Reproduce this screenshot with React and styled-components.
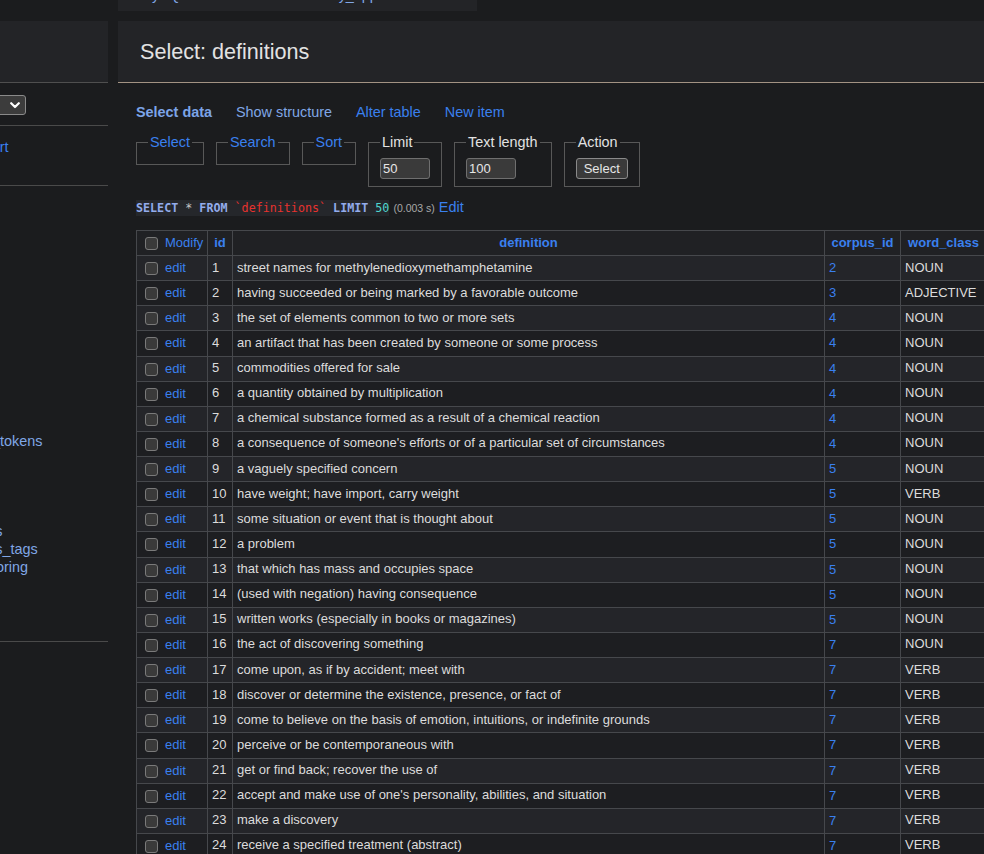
import React from 'react';
import styled, { createGlobalStyle } from 'styled-components';

const LINK = '#3a80ef';
const VISITED = '#80a7e6';

const GlobalStyle = createGlobalStyle`
  html, body { margin: 0; padding: 0; background: #1b1c1e; overflow: hidden; }
  body { font-family: "Liberation Sans", Arial, sans-serif; font-size: 14.4px; color: #dcdcdc; }
  * { box-sizing: border-box; }
`;

const Page = styled.div`
  display: flex;
  align-items: flex-start;
  width: 984px;
  height: 854px;
  overflow: hidden;
`;

/* ---------- Sidebar ---------- */
const Sidebar = styled.aside`
  width: 108px;
  flex-shrink: 0;
  padding-top: 21px;
  overflow: hidden;
`;

const SideHead = styled.div`
  height: 62px;
  background: #232427;
  border-bottom: 1px solid #4f4f4f;
`;

const DbSelect = styled.div`
  margin: 12px 0 0 -60px;
  width: 86px;
  height: 20px;
  border: 1px solid #8a8a8a;
  border-radius: 3px;
  background: #3c3c3c;
  display: flex;
  align-items: center;
  justify-content: flex-end;
  padding-right: 3px;
`;

const SideRule = styled.hr`
  margin: ${p => p.$top}px 0 0 0;
  height: 0;
  border: 0;
  border-top: 1px solid #4a4a4a;
`;

const SideLinks = styled.p`
  margin: 13px 0 0 ${p => p.$offset}px;
  height: 33px;
  line-height: 16px;
  white-space: nowrap;
`;

const SideLink = styled.a`
  color: ${p => (p.$visited ? VISITED : LINK)};
  text-decoration: none;
`;

const TableList = styled.ul`
  list-style: none;
  margin: 12px 0 0 -36px;
  padding: 0;
`;

const TableItem = styled.li`
  height: 18px;
  line-height: 18px;
  white-space: nowrap;
`;

/* ---------- Main ---------- */
const Main = styled.main`
  flex: 1;
  min-width: 0;
  margin-left: 10px;
`;

const Breadcrumb = styled.div`
  width: 359px;
  height: 11px;
  background: #232427;
  overflow: hidden;
  padding-left: 22px;
  margin-bottom: 10px;
`;

const CrumbText = styled.div`
  margin-top: -13px;
  line-height: 16px;
  color: ${VISITED};
  white-space: nowrap;
`;

const Header = styled.header`
  height: 62px;
  background: #232427;
  border-bottom: 1px solid #a39383;
  display: flex;
  align-items: center;
  padding-left: 22px;
`;

const Title = styled.h2`
  margin: 0;
  font-size: 21.6px;
  font-weight: normal;
  color: #e2e2e2;
`;

const Content = styled.div`
  padding: 0 18px;
`;

const Menu = styled.nav`
  display: flex;
  gap: 24px;
  margin-top: 21px;
  line-height: 16px;
`;

const MenuLink = styled.a`
  color: ${p => p.$color};
  font-weight: ${p => (p.$bold ? 'bold' : 'normal')};
  text-decoration: none;
`;

const Forms = styled.div`
  display: flex;
  align-items: flex-start;
  gap: 12px;
  margin-top: 14px;
`;

const Fieldset = styled.fieldset`
  margin: 0;
  padding: 7px 11px;
  border: 1px solid #585858;
  min-width: 0;
`;

const Legend = styled.legend`
  padding: 0 2px;
  line-height: 16px;
  color: ${p => (p.$link ? LINK : '#e2e2e2')};
`;

const TextInput = styled.input`
  display: block;
  width: 50px;
  height: 21px;
  margin: 1px 0 0 0;
  padding: 0 2px;
  background: #3a3a3a;
  border: 1px solid #6f6f6f;
  border-radius: 3px;
  color: #e6e6e6;
  font-family: "Liberation Sans", Arial, sans-serif;
  font-size: 13px;
`;

const Button = styled.button`
  display: block;
  height: 21px;
  margin: 1px 0 0 0;
  padding: 0 7px;
  background: #3a3a3a;
  border: 1px solid #8a8a8a;
  border-radius: 3px;
  color: #e6e6e6;
  font-family: "Liberation Sans", Arial, sans-serif;
  font-size: 13px;
`;

const SqlLine = styled.p`
  margin: 12px 0 0 0;
  line-height: 16px;
  white-space: nowrap;
`;

const Code = styled.code`
  font-family: "DejaVu Sans Mono", monospace;
  font-size: 11.7px;
  background: #25272b;
  padding: 1px 0;
  color: #c8c8c8;
`;

const Kw = styled.b`
  color: #93acec;
`;

const Ident = styled.span`
  color: #e8322e;
`;

const Num = styled.span`
  color: #4fd6d0;
`;

const Time = styled.span`
  font-size: 10.5px;
  color: #a8a8a8;
`;

const PlainLink = styled.a`
  color: ${LINK};
  text-decoration: none;
`;

const Table = styled.table`
  border-collapse: collapse;
  table-layout: fixed;
  width: 850px;
  margin-top: 14px;
  font-size: 13px;
`;

const Th = styled.th`
  border: 1px solid #46484c;
  padding: 0 4px 2px 4px;
  height: 25px;
  background: #202124;
  text-align: ${p => (p.$left ? 'left' : 'center')};
  font-weight: ${p => (p.$plain ? 'normal' : 'bold')};
  white-space: nowrap;
  overflow: hidden;
`;

const Tr = styled.tr`
  background: ${p => (p.$odd ? '#242529' : '#1d1e21')};
`;

const Td = styled.td`
  border: 1px solid #46484c;
  padding: 0 4px 2px 4px;
  height: 25.13px;
  color: #dcdcdc;
  white-space: nowrap;
  overflow: hidden;
`;

const Check = styled.input.attrs({ type: 'checkbox' })`
  appearance: none;
  -webkit-appearance: none;
  width: 13px;
  height: 13px;
  margin: 0 7px 0 4px;
  border: 1px solid #7a7a7a;
  border-radius: 3px;
  background: #3a3a3a;
  vertical-align: middle;
  position: relative;
  top: 1px;
`;

const CellLink = styled.a`
  color: ${LINK};
  text-decoration: none;
  vertical-align: middle;
`;

const Chevron = () => (
  <svg width="10" height="7" viewBox="0 0 10 7" style={{ marginRight: 2 }}>
    <path d="M1.2 1.2 L5 5 L8.8 1.2" fill="none" stroke="#fff" strokeWidth="2.2" strokeLinecap="round" strokeLinejoin="round" />
  </svg>
);

const tables = [
  'affix', 'files', 'jobs', 'lists', 'logs', 'roles', 'rules', 'sets', 'sites', 'tags',
  'texts', 'links', 'likes', 'auth_tokens', 'roots', 'stats', 'tiers', 'units', 'words',
  'words_tags', 'mentoring', 'urls', 'wikis', 'xrefs',
];

const rows = [
  [1, 'street names for methylenedioxymethamphetamine', 2, 'NOUN'],
  [2, 'having succeeded or being marked by a favorable outcome', 3, 'ADJECTIVE'],
  [3, 'the set of elements common to two or more sets', 4, 'NOUN'],
  [4, 'an artifact that has been created by someone or some process', 4, 'NOUN'],
  [5, 'commodities offered for sale', 4, 'NOUN'],
  [6, 'a quantity obtained by multiplication', 4, 'NOUN'],
  [7, 'a chemical substance formed as a result of a chemical reaction', 4, 'NOUN'],
  [8, "a consequence of someone's efforts or of a particular set of circumstances", 4, 'NOUN'],
  [9, 'a vaguely specified concern', 5, 'NOUN'],
  [10, 'have weight; have import, carry weight', 5, 'VERB'],
  [11, 'some situation or event that is thought about', 5, 'NOUN'],
  [12, 'a problem', 5, 'NOUN'],
  [13, 'that which has mass and occupies space', 5, 'NOUN'],
  [14, '(used with negation) having consequence', 5, 'NOUN'],
  [15, 'written works (especially in books or magazines)', 5, 'NOUN'],
  [16, 'the act of discovering something', 7, 'NOUN'],
  [17, 'come upon, as if by accident; meet with', 7, 'VERB'],
  [18, 'discover or determine the existence, presence, or fact of', 7, 'VERB'],
  [19, 'come to believe on the basis of emotion, intuitions, or indefinite grounds', 7, 'VERB'],
  [20, 'perceive or be contemporaneous with', 7, 'VERB'],
  [21, 'get or find back; recover the use of', 7, 'VERB'],
  [22, "accept and make use of one's personality, abilities, and situation", 7, 'VERB'],
  [23, 'make a discovery', 7, 'VERB'],
  [24, 'receive a specified treatment (abstract)', 7, 'VERB'],
];

export default function App() {
  return (
    <>
      <GlobalStyle />
      <Page>
        <Sidebar>
          <SideHead />
          <DbSelect>
            <Chevron />
          </DbSelect>
          <SideRule $top={10} />
          <SideLinks $offset={-33}>
            <SideLink>Export</SideLink>
          </SideLinks>
          <SideRule $top={13} />
          <TableList>
            {tables.map(t => (
              <TableItem key={t}>
                <SideLink $visited>{t}</SideLink>
              </TableItem>
            ))}
          </TableList>
          <SideRule $top={11} />
        </Sidebar>

        <Main>
          <Breadcrumb>
            <CrumbText>MySQL » localhost » vocabulary_app » definitions</CrumbText>
          </Breadcrumb>
          <Header>
            <Title>Select: definitions</Title>
          </Header>
          <Content>
            <Menu>
              <MenuLink $bold $color="#7ca4e8">Select data</MenuLink>
              <MenuLink $color={VISITED}>Show structure</MenuLink>
              <MenuLink $color={LINK}>Alter table</MenuLink>
              <MenuLink $color={LINK}>New item</MenuLink>
            </Menu>

            <Forms>
              <Fieldset><Legend $link>Select</Legend></Fieldset>
              <Fieldset><Legend $link>Search</Legend></Fieldset>
              <Fieldset><Legend $link>Sort</Legend></Fieldset>
              <Fieldset>
                <Legend>Limit</Legend>
                <TextInput defaultValue="50" />
              </Fieldset>
              <Fieldset>
                <Legend>Text length</Legend>
                <TextInput defaultValue="100" />
              </Fieldset>
              <Fieldset>
                <Legend>Action</Legend>
                <Button>Select</Button>
              </Fieldset>
            </Forms>

            <SqlLine>
              <Code>
                <Kw>SELECT</Kw> * <Kw>FROM</Kw> <Ident>`definitions`</Ident> <Kw>LIMIT</Kw> <Num>50</Num>
              </Code>{' '}
              <Time>(0.003 s)</Time> <PlainLink>Edit</PlainLink>
            </SqlLine>

            <Table>
              <colgroup>
                <col style={{ width: 71 }} />
                <col style={{ width: 25 }} />
                <col style={{ width: 592 }} />
                <col style={{ width: 76 }} />
                <col style={{ width: 86 }} />
              </colgroup>
              <thead>
                <tr>
                  <Th $left $plain>
                    <Check readOnly />
                    <CellLink>Modify</CellLink>
                  </Th>
                  <Th><CellLink>id</CellLink></Th>
                  <Th><CellLink>definition</CellLink></Th>
                  <Th><CellLink>corpus_id</CellLink></Th>
                  <Th><CellLink>word_class</CellLink></Th>
                </tr>
              </thead>
              <tbody>
                {rows.map(([id, def, corpus, wc], i) => (
                  <Tr key={id} $odd={i % 2 === 0}>
                    <Td>
                      <Check readOnly />
                      <CellLink>edit</CellLink>
                    </Td>
                    <Td>{id}</Td>
                    <Td>{def}</Td>
                    <Td><CellLink>{corpus}</CellLink></Td>
                    <Td>{wc}</Td>
                  </Tr>
                ))}
              </tbody>
            </Table>
          </Content>
        </Main>
      </Page>
    </>
  );
}
